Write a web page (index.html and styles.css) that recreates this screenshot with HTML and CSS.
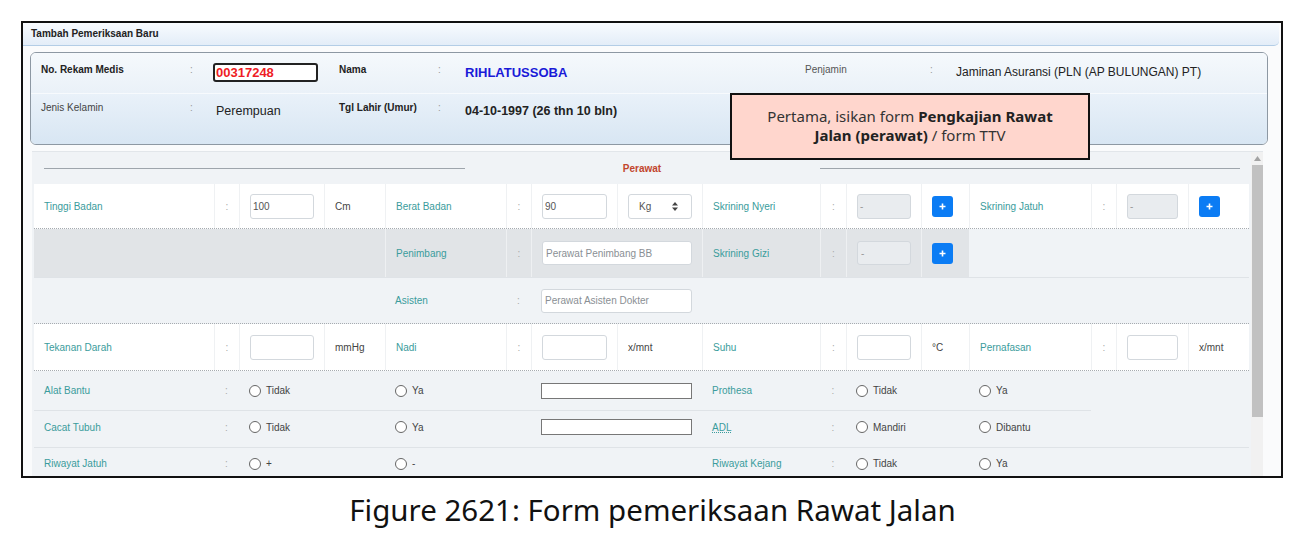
FILE: index.html
```html
<!DOCTYPE html>
<html lang="id">
<head>
    <meta charset="UTF-8">
    <title>Tambah Pemeriksaan Baru</title>
    <link rel="stylesheet" href="styles.css">
</head>
<body>
<div class="frame">
    <div class="frame-head">Tambah Pemeriksaan Baru</div>

    <!-- data pasien -->
    <div class="pasien">
        <div class="pasien-row top">
            <span class="p-lbl bold">No. Rekam Medis</span><span class="p-sep">:</span>
            <span class="p-val"><span class="norm">00317248</span></span>
            <span class="p-lbl bold">Nama</span><span class="p-sep">:</span>
            <span class="p-val nama">RIHLATUSSOBA</span>
            <span class="p-lbl thin">Penjamin</span><span class="p-sep">:</span>
            <span class="p-val">Jaminan Asuransi (PLN (AP BULUNGAN) PT)</span>
        </div>
        <div class="pasien-row bottom">
            <span class="p-lbl">Jenis Kelamin</span><span class="p-sep">:</span>
            <span class="p-val big">Perempuan</span>
            <span class="p-lbl bold">Tgl Lahir (Umur)</span><span class="p-sep">:</span>
            <span class="p-val big bold">04-10-1997 (26 thn 10 bln)</span>
        </div>
    </div>

    <div class="scroll">
        <div class="scroll-body">
            <div class="divider"><span class="line"></span><b>Perawat</b><span class="line"></span></div>

            <!-- tinggi / berat / skrining -->
            <div class="grid row-a white dotted">
                <div class="c lbl">Tinggi Badan</div>
                <div class="c sep">:</div>
                <div class="c"><input class="inp" value="100"></div>
                <div class="c unit">Cm</div>
                <div class="c lbl">Berat Badan</div>
                <div class="c sep">:</div>
                <div class="c"><input class="inp" value="90"></div>
                <div class="c">
                    <div class="select"><span>Kg</span>
                        <svg width="6" height="9" viewBox="0 0 6 9"><path d="M3 0L6 3.5H0z M3 9L0 5.5H6z" fill="#444"/></svg>
                    </div>
                </div>
                <div class="c lbl">Skrining Nyeri</div>
                <div class="c sep">:</div>
                <div class="c"><input class="inp off" value="-" disabled></div>
                <div class="c"><button class="plus"><svg width="7" height="7" viewBox="0 0 7 7"><path d="M3.5 0.5v6M0.5 3.5h6" stroke="#fff" stroke-width="1.6"/></svg></button></div>
                <div class="c lbl">Skrining Jatuh</div>
                <div class="c sep">:</div>
                <div class="c"><input class="inp off" value="-" disabled></div>
                <div class="c"><button class="plus"><svg width="7" height="7" viewBox="0 0 7 7"><path d="M3.5 0.5v6M0.5 3.5h6" stroke="#fff" stroke-width="1.6"/></svg></button></div>
            </div>

            <div class="grid row-b solid">
                <div class="c gray span4"></div>
                <div class="c lbl gray">Penimbang</div>
                <div class="c sep gray">:</div>
                <div class="c gray span2"><input class="inp" placeholder="Perawat Penimbang BB"></div>
                <div class="c lbl gray">Skrining Gizi</div>
                <div class="c sep gray">:</div>
                <div class="c gray"><input class="inp off" value="-" disabled></div>
                <div class="c gray"><button class="plus"><svg width="7" height="7" viewBox="0 0 7 7"><path d="M3.5 0.5v6M0.5 3.5h6" stroke="#fff" stroke-width="1.6"/></svg></button></div>
                <div class="c span4"></div>
            </div>

            <div class="grid row-c dotted">
                <div class="c span4"></div>
                <div class="c lbl">Asisten</div>
                <div class="c sep">:</div>
                <div class="c span2"><input class="inp" placeholder="Perawat Asisten Dokter"></div>
                <div class="c span8"></div>
            </div>

            <!-- tanda vital -->
            <div class="grid row-d white dotted">
                <div class="c lbl">Tekanan Darah</div>
                <div class="c sep">:</div>
                <div class="c"><input class="inp"></div>
                <div class="c unit">mmHg</div>
                <div class="c lbl">Nadi</div>
                <div class="c sep">:</div>
                <div class="c"><input class="inp"></div>
                <div class="c unit">x/mnt</div>
                <div class="c lbl">Suhu</div>
                <div class="c sep">:</div>
                <div class="c"><input class="inp"></div>
                <div class="c unit">°C</div>
                <div class="c lbl">Pernafasan</div>
                <div class="c sep">:</div>
                <div class="c"><input class="inp"></div>
                <div class="c unit">x/mnt</div>
            </div>

            <div class="grid row-e plain">
                <div class="c lbl ln">Alat Bantu</div>
                <div class="c sep ln">:</div>
                <div class="c span2 ln"><label class="radio"><span class="dot"></span>Tidak</label></div>
                <div class="c span2 ln"><label class="radio"><span class="dot"></span>Ya</label></div>
                <div class="c span2 ln"><input class="txt"></div>
                <div class="c lbl ln">Prothesa</div>
                <div class="c sep ln">:</div>
                <div class="c span2 ln"><label class="radio"><span class="dot"></span>Tidak</label></div>
                <div class="c ln"><label class="radio"><span class="dot"></span>Ya</label></div>
                <div class="c span3"></div>
            </div>

            <div class="grid row-f plain solid">
                <div class="c lbl">Cacat Tubuh</div>
                <div class="c sep">:</div>
                <div class="c span2"><label class="radio"><span class="dot"></span>Tidak</label></div>
                <div class="c span2"><label class="radio"><span class="dot"></span>Ya</label></div>
                <div class="c span2"><input class="txt"></div>
                <div class="c lbl"><abbr title="Activity of Daily Living">ADL</abbr></div>
                <div class="c sep">:</div>
                <div class="c span2"><label class="radio"><span class="dot"></span>Mandiri</label></div>
                <div class="c"><label class="radio"><span class="dot"></span>Dibantu</label></div>
                <div class="c span3"></div>
            </div>

            <div class="grid row-g plain">
                <div class="c lbl">Riwayat Jatuh</div>
                <div class="c sep">:</div>
                <div class="c span2"><label class="radio"><span class="dot"></span>+</label></div>
                <div class="c span2"><label class="radio"><span class="dot"></span>-</label></div>
                <div class="c span2"></div>
                <div class="c lbl">Riwayat Kejang</div>
                <div class="c sep">:</div>
                <div class="c span2"><label class="radio"><span class="dot"></span>Tidak</label></div>
                <div class="c"><label class="radio"><span class="dot"></span>Ya</label></div>
                <div class="c span3"></div>
            </div>
        </div>
        <div class="scrollbar">
            <svg class="arrow" width="7" height="5" viewBox="0 0 7 5"><path d="M3.5 0L7 5H0z" fill="#a3a3a3"/></svg>
            <div class="thumb"></div>
        </div>
    </div>

    <div class="callout">Pertama, isikan form <b>Pengkajian Rawat Jalan (perawat)</b> / form TTV</div>
</div>
<p class="caption">Figure 2621: Form pemeriksaan Rawat Jalan</p>
</body>
</html>
```

FILE: styles.css
```css
*
{
    margin: 0;
    padding: 0;
    box-sizing: border-box;
}
body
{
    background: #fff;
    font-family: "Liberation Sans", Arial, sans-serif;
    color: #333;
}

.frame
{
    position: relative;
    width: 1262px;
    height: 457px;
    margin: 21px 0 0 21px;
    border: 2px solid #111;
    background: #fafbfc;
    overflow: hidden;
}
.frame-head
{
    height: 23px;
    margin-right: 2px;
    padding-left: 8px;
    font-size: 10px;
    font-weight: bold;
    line-height: 22px;
    color: #222;
    background: linear-gradient(#f8fbfe, #e3edf8);
    border-bottom: 1px solid #b3cde6;
    border-radius: 0 0 5px 0;
}

/* panel data pasien */
.pasien
{
    width: 1238px;
    height: 93px;
    margin: 6px 0 0 7px;
    border: 1px solid #8d98a3;
    border-radius: 6px;
    overflow: hidden;
}
.pasien-row
{
    display: grid;
    grid-template-columns: 149px 24px 125px 99px 27px 340px 125px 26px 1fr;
    align-items: start;
    padding-left: 10px;
}
.pasien-row.top
{
    height: 41px;
    padding-top: 10px;
    background: linear-gradient(#f5f9fc, #eaf1f8);
    border-bottom: 1px solid #f7fafd;
}
.pasien-row.bottom
{
    height: 50px;
    padding-top: 7px;
    background: linear-gradient(#e9f1f9, #d8e6f3);
}
.p-lbl
{
    font-size: 10px;
    line-height: 14px;
    color: #444;
}
.p-lbl.bold
{
    font-weight: bold;
    color: #222;
}
.p-lbl.thin
{
    color: #555;
}
.p-sep
{
    font-size: 10px;
    line-height: 14px;
    color: #999;
}
.p-val
{
    font-size: 12px;
    line-height: 19px;
    color: #222;
}
.p-val.big
{
    padding-left: 2px;
    font-size: 12.5px;
    line-height: 21px;
}
.p-val.bold
{
    padding-left: 0;
    font-weight: bold;
}
.norm
{
    display: block;
    width: 105px;
    height: 19px;
    margin-left: -1px;
    padding-left: 1px;
    border: 2px solid #222;
    border-radius: 3px;
    font-size: 13px;
    font-weight: bold;
    line-height: 15px;
    color: #ee1c25;
    background: #fff;
}
.nama
{
    font-size: 13px;
    font-weight: bold;
    color: #1a1ad8;
}

.scroll
{
    display: flex;
    width: 1231px;
    height: 325px;
    margin: 6px 0 0 9px;
    border-top: 1px solid #e2e6ea;
    background: #f0f3f6;
}
.scroll-body
{
    flex: 1;
    padding: 0 2px;
    overflow: hidden;
}
.scrollbar
{
    width: 12px;
    background: #f1f1f1;
    display: flex;
    flex-direction: column;
    align-items: center;
}
.scrollbar .arrow
{
    margin: 4px 0 4px;
}
.scrollbar .thumb
{
    width: 11px;
    height: 252px;
    background: #c1c1c1;
}

.divider
{
    display: flex;
    align-items: center;
    height: 32px;
    padding: 0 9px 0 10px;
}
.divider .line
{
    flex: 1;
    height: 1px;
    background: #9ea5ac;
}
.divider b
{
    width: 355px;
    text-align: center;
    font-size: 10px;
    color: #c2452d;
}

.grid
{
    display: grid;
    grid-template-columns: 180px 25px 85px 61px 121px 25px 86px 85px 118px 26px 75px 48px 122px 25px 72px 61px;
}
.row-a { height: 45px; }
.row-b { height: 49px; }
.row-c { height: 46px; }
.row-d { height: 47px; }
.row-e { height: 40px; padding-bottom: 1px; }
.row-f { height: 37px; padding-bottom: 4px; }
.row-g { height: 34px; padding-bottom: 3px; }

.white
{
    background: #fff;
}
.dotted
{
    border-bottom: 1px dotted #a6abb0;
}
.solid
{
    border-bottom: 1px solid #dfe3e7;
}

.c
{
    display: flex;
    align-items: center;
    padding: 0 10px;
    font-size: 10px;
    color: #444;
    min-width: 0;
}
.white .c + .c
{
    border-left: 1px solid #eff1f3;
}
.c.gray
{
    background: #e1e4e7;
}
.c.gray + .c.gray
{
    border-left: 1px solid #eef0f2;
}
.c.ln
{
    border-bottom: 1px solid #dfe3e7;
    margin-bottom: -1px;
}
.span2 { grid-column: span 2; }
.span3 { grid-column: span 3; }
.span4 { grid-column: span 4; }
.span8 { grid-column: span 8; }

.lbl
{
    color: #3a9c9c;
}
.lbl abbr
{
    text-decoration: underline dotted;
}
.sep
{
    justify-content: center;
    padding: 0;
    color: #aaa;
}
.unit
{
    color: #444;
}

.inp
{
    width: 100%;
    height: 25px;
    padding: 0 2px;
    border: 1px solid #d3d8dd;
    border-radius: 3px;
    background: #fff;
    font: 10px "Liberation Sans", Arial, sans-serif;
    color: #555;
    outline: none;
}
.row-b .inp,
.row-c .inp
{
    height: 24px;
    padding-left: 3px;
}
.inp::placeholder
{
    color: #8a8f94;
}
.inp.off
{
    background: #e9ecef;
    color: #999;
}
.txt
{
    width: 100%;
    height: 16px;
    border: 1px solid #777;
    background: #fff;
    outline: none;
}
.select
{
    display: flex;
    align-items: center;
    justify-content: space-between;
    width: 100%;
    height: 25px;
    padding: 0 13px 0 10px;
    border: 1px solid #d3d8dd;
    border-radius: 3px;
    background: #fff;
    color: #555;
}
.plus
{
    display: flex;
    align-items: center;
    justify-content: center;
    width: 21px;
    height: 21px;
    border: none;
    border-radius: 3px;
    background: #0b7cf4;
}

.radio
{
    display: flex;
    align-items: center;
    gap: 5px;
    font-size: 10px;
    color: #444;
}
.radio .dot
{
    width: 12px;
    height: 12px;
    border: 1px solid #666;
    border-radius: 50%;
    background: #fff;
}

/* keterangan langkah */
.callout
{
    position: absolute;
    left: 707px;
    top: 70px;
    width: 360px;
    height: 67px;
    padding: 12px 26px 0;
    border: 2px solid #111;
    background: #ffd6cd;
    font-family: "Noto Sans", sans-serif;
    font-size: 15px;
    line-height: 19px;
    color: #333;
    text-align: center;
    z-index: 2;
}
.callout b
{
    color: #222;
}

.caption
{
    margin-top: 13px;
    text-align: center;
    font-family: "Noto Sans", sans-serif;
    font-size: 29.5px;
    line-height: 38px;
    color: #111;
}
```
